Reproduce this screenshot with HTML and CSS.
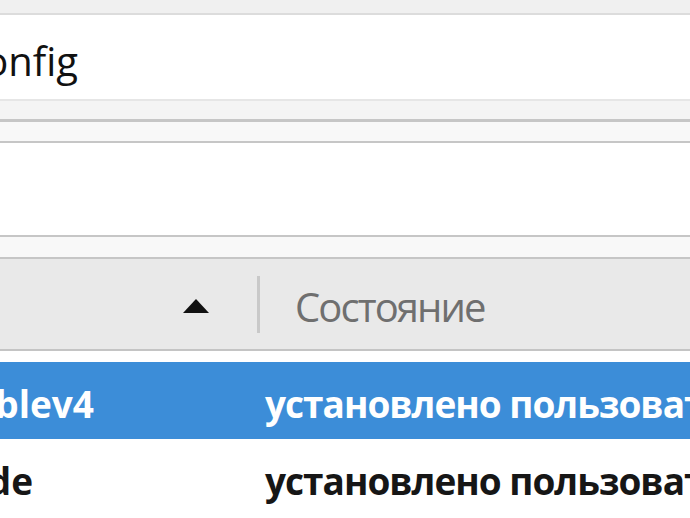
FILE: index.html
```html
<!DOCTYPE html>
<html lang="ru">
<head>
<meta charset="utf-8">
<title>about:config</title>
<link rel="stylesheet" href="styles.css">
</head>
<body>
<div class="chrome">
  <div class="tabstrip"></div>
  <div class="urlbar"><span class="url">about:config</span></div>
  <div class="band band-top"></div>
  <div class="band band-mid"></div>
  <div class="search"></div>
  <div class="band band-low"></div>
</div>
<div class="tree">
  <div class="tree-head">
    <div class="col col-name">
      <svg class="sort" width="28" height="16" viewBox="0 0 28 16"><polygon points="14,1 27,15 1,15" fill="#111"/></svg>
    </div>
    <div class="col-sep"></div>
    <div class="col col-state">Состояние</div>
  </div>
  <div class="tree-body">
    <div class="row selected">
      <div class="cell cell-name"><span class="name">network.dns.disablev4</span></div>
      <div class="cell cell-state">установлено пользователем</div>
    </div>
    <div class="row">
      <div class="cell cell-name"><span class="name">browser.cache.mode</span></div>
      <div class="cell cell-state">установлено пользователем</div>
    </div>
  </div>
</div>
</body>
</html>
```

FILE: styles.css
```css
html, body {
  margin: 0;
  padding: 0;
  background: #fff;
  width: 690px;
  height: 518px;
  overflow: hidden;
  font-family: "Open Sans", "Noto Sans", sans-serif;
}

.tabstrip {
  height: 13px;
  background: #f0f0f0;
  border-bottom: 2px solid #dcdcdc;
}

.urlbar {
  height: 84px;
  background: #fff;
  display: flex;
  align-items: center;
  overflow: hidden;
  white-space: nowrap;
}

.url {
  font-size: 40px;
  color: #111;
  margin-left: -155px;
  padding-top: 6px;
}

.band { background: #f8f8f8; }
.band-top {
  height: 18px;
  background: #f4f4f4;
  border-top: 2px solid #e6e6e6;
  border-bottom: 3px solid #c6c6c6;
}
.band-mid {
  height: 19px;
  border-bottom: 2px solid #c6c6c6;
}
.search {
  height: 92px;
  background: #fff;
}
.band-low {
  height: 20px;
  border-top: 2px solid #c6c6c6;
  border-bottom: 2px solid #c6c6c6;
}

.tree-head {
  height: 90px;
  background: #e9e9e9;
  border-bottom: 2px solid #c4c4c4;
  display: flex;
  align-items: center;
}
.col-name {
  width: 257px;
  display: flex;
  justify-content: flex-end;
  padding-right: 47px;
  padding-top: 3px;
  box-sizing: border-box;
}
.sort { display: block; }
.col-sep {
  width: 3px;
  height: 57px;
  background: #c9c9c9;
}
.col-state {
  padding-left: 35px;
  font-size: 40px;
  letter-spacing: -1.9px;
  color: #6f6f6f;
  white-space: nowrap;
  padding-top: 5px;
}

.tree-body {
  padding-top: 11px;
}
.row {
  height: 77px;
  display: flex;
  align-items: center;
  font-weight: bold;
  font-size: 37px;
  color: #161616;
  white-space: nowrap;
  overflow: hidden;
}
.row.selected {
  background: #3c8dd8;
  color: #fff;
}
.cell-name {
  width: 265px;
  flex: none;
  overflow: hidden;
  display: flex;
  justify-content: flex-end;
  padding-right: 171px;
  box-sizing: border-box;
}
.row:not(.selected) .cell-name { padding-right: 232px; }
.cell-state {
  flex: none;
  letter-spacing: -1px;
  padding-top: 6px;
}
.cell-name .name { padding-top: 6px; }
```
